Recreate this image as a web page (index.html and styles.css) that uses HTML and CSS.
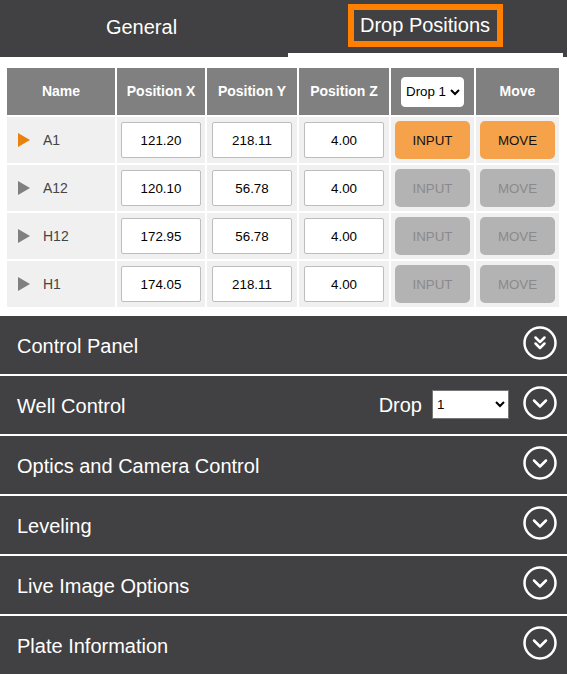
FILE: index.html
```html
<!DOCTYPE html>
<html lang="en">
<head>
<meta charset="utf-8">
<title>Drop Positions</title>
<link rel="stylesheet" href="styles.css">
</head>
<body>
<header class="tabs">
  <div class="tab">General</div>
  <div class="tab tab-active"><span class="tab-focus">Drop Positions</span></div>
</header>

<section class="drops">
  <div class="grid">
    <div class="th">Name</div>
    <div class="th">Position X</div>
    <div class="th">Position Y</div>
    <div class="th">Position Z</div>
    <div class="th"><select class="drop-select"><option>Drop 1</option><option>Drop 2</option></select></div>
    <div class="th">Move</div>

    <div class="td name"><span class="tri tri-on"></span>A1</div>
    <div class="td"><input class="num" value="121.20"></div>
    <div class="td"><input class="num" value="218.11"></div>
    <div class="td"><input class="num" value="4.00"></div>
    <div class="td"><button class="btn btn-on">INPUT</button></div>
    <div class="td"><button class="btn btn-on">MOVE</button></div>

    <div class="td name"><span class="tri"></span>A12</div>
    <div class="td"><input class="num" value="120.10"></div>
    <div class="td"><input class="num" value="56.78"></div>
    <div class="td"><input class="num" value="4.00"></div>
    <div class="td"><button class="btn">INPUT</button></div>
    <div class="td"><button class="btn">MOVE</button></div>

    <div class="td name"><span class="tri"></span>H12</div>
    <div class="td"><input class="num" value="172.95"></div>
    <div class="td"><input class="num" value="56.78"></div>
    <div class="td"><input class="num" value="4.00"></div>
    <div class="td"><button class="btn">INPUT</button></div>
    <div class="td"><button class="btn">MOVE</button></div>

    <div class="td name"><span class="tri"></span>H1</div>
    <div class="td"><input class="num" value="174.05"></div>
    <div class="td"><input class="num" value="218.11"></div>
    <div class="td"><input class="num" value="4.00"></div>
    <div class="td"><button class="btn">INPUT</button></div>
    <div class="td"><button class="btn">MOVE</button></div>
  </div>
</section>

<div class="panels">
  <div class="panel">
    <span class="panel-title">Control Panel</span>
    <svg class="toggle" viewBox="0 0 34 34"><circle cx="17" cy="17" r="15.5"/><polyline points="12.5,11.5 17,16 21.5,11.5"/><polyline points="12.5,17.5 17,22 21.5,17.5"/></svg>
  </div>
  <div class="panel">
    <span class="panel-title">Well Control</span>
    <span class="panel-extra">
      <span class="drop-label">Drop</span>
      <select class="well-select"><option>1</option><option>2</option></select>
    </span>
    <svg class="toggle" viewBox="0 0 34 34"><circle cx="17" cy="17" r="15.5"/><polyline points="11,14.5 17,20.5 23,14.5"/></svg>
  </div>
  <div class="panel">
    <span class="panel-title">Optics and Camera Control</span>
    <svg class="toggle" viewBox="0 0 34 34"><circle cx="17" cy="17" r="15.5"/><polyline points="11,14.5 17,20.5 23,14.5"/></svg>
  </div>
  <div class="panel">
    <span class="panel-title">Leveling</span>
    <svg class="toggle" viewBox="0 0 34 34"><circle cx="17" cy="17" r="15.5"/><polyline points="11,14.5 17,20.5 23,14.5"/></svg>
  </div>
  <div class="panel">
    <span class="panel-title">Live Image Options</span>
    <svg class="toggle" viewBox="0 0 34 34"><circle cx="17" cy="17" r="15.5"/><polyline points="11,14.5 17,20.5 23,14.5"/></svg>
  </div>
  <div class="panel">
    <span class="panel-title">Plate Information</span>
    <svg class="toggle" viewBox="0 0 34 34"><circle cx="17" cy="17" r="15.5"/><polyline points="11,14.5 17,20.5 23,14.5"/></svg>
  </div>
</div>
</body>
</html>
```

FILE: styles.css
```css
* { box-sizing: border-box; }

html, body {
  margin: 0;
  padding: 0;
  background: #ffffff;
  font-family: "Liberation Sans", Arial, sans-serif;
  overflow: hidden;
}

.tabs {
  display: grid;
  grid-template-columns: 283px 275px;
  column-gap: 5px;
  height: 57px;
  background: #414042;
}

.tab {
  display: flex;
  align-items: center;
  justify-content: center;
  height: 57px;
  padding-bottom: 3px;
  color: #ffffff;
  font-size: 20px;
}

.tab-active {
  border-bottom: 4px solid #ffffff;
  padding-bottom: 2px;
}

.tab-focus {
  display: inline-block;
  border: 6px solid #ff8000;
  padding: 3px 7px 4px 6px;
  line-height: 24px;
}

.drops {
  padding: 11px 0 9px 7px;
}

.grid {
  display: grid;
  grid-template-columns: 108px 88px 90px 90px 83px 83px;
  grid-template-rows: 47px repeat(4, 46px);
  gap: 2px;
}

.th {
  display: flex;
  align-items: center;
  justify-content: center;
  background: #808080;
  color: #ffffff;
  font-weight: bold;
  font-size: 14px;
  padding-bottom: 1px;
}

.td {
  display: flex;
  align-items: center;
  justify-content: center;
  background: #f0f0f0;
}

.td.name {
  justify-content: flex-start;
  padding-left: 11px;
  color: #444444;
  font-size: 14px;
}

.tri {
  width: 0;
  height: 0;
  border-top: 7.5px solid transparent;
  border-bottom: 7.5px solid transparent;
  border-left: 12px solid #808080;
  margin-right: 13px;
}

.tri-on {
  border-left-color: #e8820c;
}

.num {
  width: 80px;
  height: 36px;
  border: 1px solid #bdbdbd;
  border-radius: 2px;
  background: #ffffff;
  text-align: center;
  font-family: "Liberation Sans", Arial, sans-serif;
  font-size: 13.333px;
  color: #000000;
  padding: 0 2px;
}

.btn {
  width: 75px;
  height: 38px;
  border: none;
  border-radius: 5px;
  background: #b3b3b3;
  color: #8a8a8a;
  font-family: "Liberation Sans", Arial, sans-serif;
  font-size: 13.333px;
  padding: 0;
}

.btn-on {
  background: #f6a24a;
  color: #111111;
}

.drop-select {
  width: 63px;
  height: 30px;
  border: 1px solid #ffffff;
  border-radius: 4px;
  background: #ffffff;
  color: #000000;
  font-family: "Liberation Sans", Arial, sans-serif;
  font-size: 13.333px;
  margin-top: 1px;
}

.panels {
  display: flex;
  flex-direction: column;
}

.panel {
  display: flex;
  align-items: center;
  height: 60px;
  flex: 0 0 60px;
  padding: 0 10px 0 17px;
  background: #414042;
  border-bottom: 2px solid #ffffff;
  color: #ffffff;
}

.panel-title {
  flex: 1;
  font-size: 20px;
  margin-top: 2px;
}

.panel-extra {
  display: flex;
  align-items: center;
  margin-right: 14px;
  margin-bottom: 2px;
}

.drop-label {
  font-size: 20px;
  margin-right: 10px;
  margin-top: 3px;
}

.well-select {
  width: 77px;
  height: 29px;
  border: 1px solid #767676;
  border-radius: 0;
  background: #ffffff;
  color: #000000;
  font-family: "Liberation Sans", Arial, sans-serif;
  font-size: 13.333px;
}

.toggle {
  width: 34px;
  height: 34px;
  margin-bottom: 4px;
  fill: none;
  stroke: #ffffff;
  stroke-width: 2.5;
  stroke-linecap: round;
  stroke-linejoin: round;
}
```
